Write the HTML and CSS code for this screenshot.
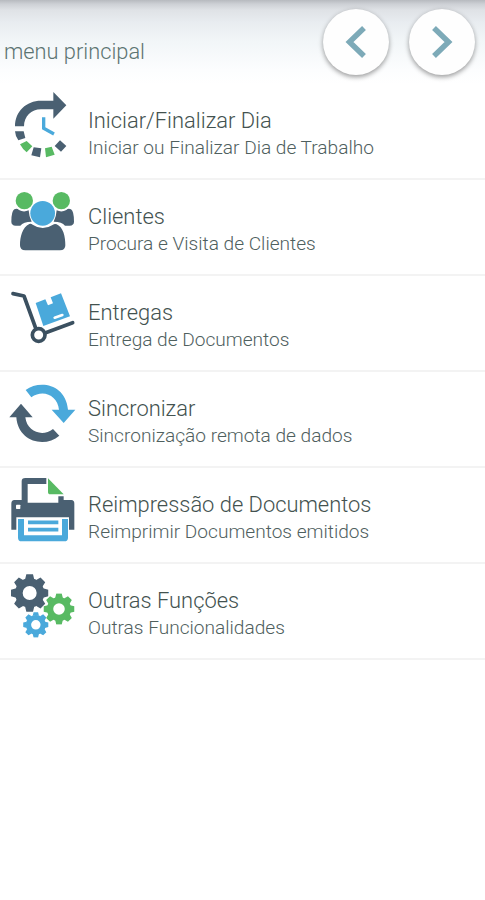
FILE: index.html
```html
<!DOCTYPE html>
<html lang="pt">
<head>
	<meta charset="utf-8">
	<meta name="viewport" content="width=device-width, user-scalable=no">
	<title>Menu principal</title>
	<link rel="stylesheet" href="styles.css">
</head>
<body>
	<div class="head">
		<h1>menu principal</h1>
		<button class="nav" aria-label="Anterior"><svg viewBox="0 0 66 66"><path d="M41 19 26.500 33 41 47"/></svg></button>
		<button class="nav" aria-label="Seguinte"><svg viewBox="0 0 66 66"><path d="M25 19 39.500 33 25 47"/></svg></button>
	</div>

	<!-- gear shared by the last entry -->
	<svg class="defs">
		<symbol id="gear" viewBox="-57 -57 114 114">
			<circle r="32.500" fill="none" stroke="currentColor" stroke-width="23"/>
			<g id="teeth" fill="currentColor">
				<path id="tooth" d="M-14-40-10-56H10L14-40ZM-14 40-10 56H10L14 40Z"/>
				<use href="#tooth" transform="rotate(45)"/>
				<use href="#tooth" transform="rotate(90)"/>
				<use href="#tooth" transform="rotate(135)"/>
			</g>
		</symbol>
	</svg>

	<ul class="menu">
		<li>
			<svg class="icon" viewBox="0 0 255 255">
				<path class="dark" d="M45 121C45 76 79 44 123 44H160V18L199 58 160 98V70H123C94 70 72 92 72 121Z"/>
				<path class="blue-line" d="M131 94V127L162 144" stroke-width="10"/>
				<path class="dark" d="M45 136H71L76 156 55 163Q46 151 45 136ZM101 184 124 187 120 214 94 208ZM180 163 199 180 183 197 164 180Z"/>
				<path class="green" d="M60 175 80 165 97 181 80 199Q68 190 60 175ZM135 187 155 182 164 206 138 214Z"/>
			</svg>
			<div class="text"><h2>Iniciar/Finalizar Dia</h2><p>Iniciar ou Finalizar Dia de Trabalho</p></div>
		</li>
		<li>
			<svg class="icon" viewBox="0 0 255 255">
				<circle class="green" cx="73" cy="56" r="26"/>
				<circle class="green" cx="184" cy="56" r="26"/>
				<path class="dark" d="M43 82Q51 78 57 84 71 92 86 85 87 104 95 119 70 119 61 131H47Q34 130 34 119 34 88 43 82ZM213 82Q205 78 199 84 185 92 170 85 169 104 161 119 186 119 195 131H209Q222 130 222 119 222 88 213 82Z"/>
				<circle class="blue" cx="128" cy="94" r="37"/>
				<path class="dark" d="M88 126Q93 124 98 128 128 148 159 128 164 124 170 127C190 136 196 164 196 190Q196 205 180 205H76Q60 205 60 190C60 164 67 136 88 126Z"/>
			</svg>
			<div class="text"><h2>Clientes</h2><p>Procura e Visita de Clientes</p></div>
		</li>
		<li>
			<svg class="icon" viewBox="0 0 255 255">
				<path class="dark-line" d="M39 47 72 54 108 153M137 164 218 134" stroke-width="11" stroke-linecap="round" stroke-linejoin="round"/>
				<circle class="dark-line" cx="116" cy="171" r="19" stroke-width="11"/>
				<path class="blue" d="M107 75 136 64 144 82 159 76 152 58 183 46 210 115 130 144Z"/>
				<path d="M164 119 187 111" stroke="#fff" stroke-width="8" stroke-linecap="round"/>
			</svg>
			<div class="text"><h2>Entregas</h2><p>Entrega de Documentos</p></div>
		</li>
		<li>
			<svg class="icon" viewBox="0 0 255 255">
				<path class="blue" d="M77 48C118 17 197 29 204 107H226L191 147 155 107H177C173 65 130 44 94 70Z"/>
				<path class="dark" d="M178 185C135 223 54 204 49 130H28L63 89 98 130H76C81 174 128 190 159 165Z"/>
			</svg>
			<div class="text"><h2>Sincronizar</h2><p>Sincronização remota de dados</p></div>
		</li>
		<li>
			<svg class="icon" viewBox="0 0 255 255">
				<path class="dark" d="M65 90V34Q65 24 76 24H139V42H83V98H175V79H191V90H214Q223 90 223 101V179H207V142H49V179H34V101Q34 90 43 90Z"/>
				<rect x="48" y="104" width="13" height="13" rx="2" fill="#fff"/>
				<path class="green" d="M144 25 191 73H151Q144 73 144 65Z"/>
				<path class="blue" d="M54 147H72V196H186V147H204V203Q204 214 193 214H65Q54 214 54 203Z"/>
				<path class="blue-line" d="M84 157H175M84 179H175" stroke-width="11"/>
			</svg>
			<div class="text"><h2>Reimpressão de Documentos</h2><p>Reimprimir Documentos emitidos</p></div>
		</li>
		<li>
			<svg class="icon" viewBox="0 0 255 255">
				<use class="dark" href="#gear" x="32" y="24" width="114" height="114"/>
				<use class="green" href="#gear" x="130" y="82" width="94" height="94"/>
				<use class="blue" href="#gear" x="69" y="138" width="77" height="77"/>
			</svg>
			<div class="text"><h2>Outras Funções</h2><p>Outras Funcionalidades</p></div>
		</li>
	</ul>
</body>
</html>
```
FILE: styles.css
```css
body{
	margin: 0;
	background: #fff;
	font-family: Roboto, "Liberation Sans", sans-serif;
	color: #4f605e;
}
.head{
	box-sizing: border-box;
	display: flex;
	align-items: flex-start;
	height: 84px;
	padding: 9px 10px 0 4px;
	background: linear-gradient(#b7babf 0, #cdd0d5 4px, #dfe2e6 10px, #e8ecf0 22px, #f2f6f8 42px, #fcfdfe 70px, #fff 84px);
}
.head h1{
	flex: 1;
	margin: 30px 0 0;
	font-size: 21.800px;
	line-height: 26px;
	font-weight: 300;
	color: #5c7472;
}
.nav{
	width: 66px;
	height: 66px;
	margin-left: 20px;
	padding: 0;
	border: 0;
	border-radius: 50%;
	background: #fefefe;
	box-shadow: 0 2px 5px rgba(0,0,0,0.4);
}
.nav svg{
	display: block;
	width: 66px;
	height: 66px;
	fill: none;
	stroke: #7daab8;
	stroke-width: 5.500;
}
.defs{
	display: none;
}

/* menu entries */
.menu{
	margin: 0;
	padding: 0;
	list-style: none;
}
.menu li{
	box-sizing: border-box;
	display: flex;
	height: 96px;
	border-bottom: 2px solid #f3f3f3;
}
.icon{
	width: 85px;
	height: 85px;
	margin: 2px 3px 0 0;
}
.text{
	padding-top: 23px;
	white-space: nowrap;
}
.text h2{
	margin: 0;
	font-size: 21.900px;
	line-height: 28px;
	font-weight: 300;
	color: #43524f;
}
.text p{
	margin: 0;
	font-size: 19.100px;
	line-height: 26px;
	font-weight: 300;
}

/* icon colours */
.dark{ fill: #4a6072; color: #4a6072; }
.green{ fill: #58ba63; color: #58ba63; }
.blue{ fill: #4aa9db; color: #4aa9db; }
.dark-line{ fill: none; stroke: #3b5060; }
.blue-line{ fill: none; stroke: #4aa9db; }
```
